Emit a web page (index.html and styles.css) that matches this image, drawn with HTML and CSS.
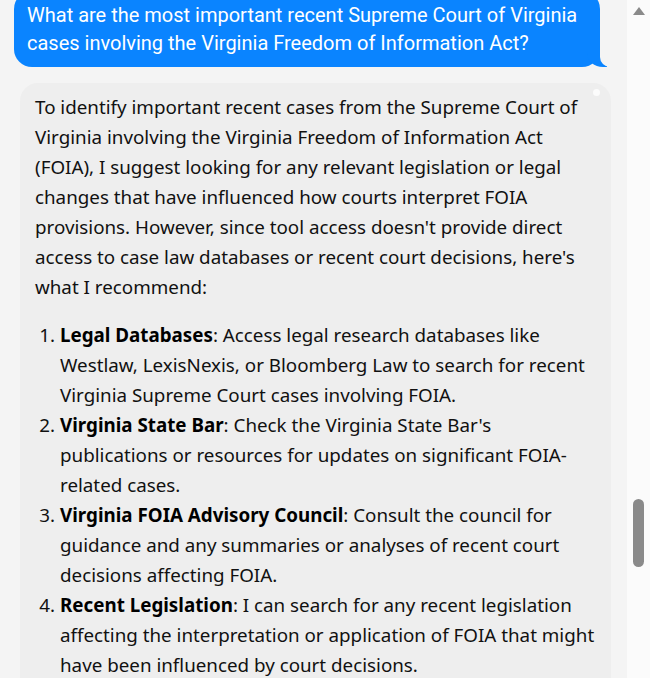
FILE: index.html
```html
<!DOCTYPE html>
<html lang="en">
<head>
    <meta charset="UTF-8">
    <title>Chat</title>
    <link rel="stylesheet" href="styles.css">
</head>
<body>

    <div class="chat">
        <div class="message user">
            What are the most important recent Supreme Court of Virginia cases involving the Virginia Freedom of Information Act?
        </div>

        <div class="message bot">
            <span class="dot"></span>
            <p>To identify important recent cases from the Supreme Court of Virginia involving the Virginia Freedom of Information Act (FOIA), I suggest looking for any relevant legislation or legal changes that have influenced how courts interpret FOIA provisions. However, since tool access doesn't provide direct access to case law databases or recent court decisions, here's what I recommend:</p>
            <ol>
                <li><strong>Legal Databases</strong>: Access legal research databases like Westlaw, LexisNexis, or Bloomberg Law to search for recent Virginia Supreme Court cases involving FOIA.</li>
                <li><strong>Virginia State Bar</strong>: Check the Virginia State Bar's publications or resources for updates on significant FOIA-related cases.</li>
                <li><strong>Virginia FOIA Advisory Council</strong>: Consult the council for guidance and any summaries or analyses of recent court decisions affecting FOIA.</li>
                <li><strong>Recent Legislation</strong>: I can search for any recent legislation affecting the interpretation or application of FOIA that might have been influenced by court decisions.</li>
            </ol>
        </div>
    </div>

    <div class="scrollbar">
        <div class="arrow"></div>
        <div class="thumb"></div>
    </div>

</body>
</html>
```

FILE: styles.css
```css
body {
    margin: 0;
    height: 678px;
    overflow: hidden;
    display: flex;
    background-color: #f4f4f4;
    font-family: 'Noto Sans', sans-serif;
}
.chat {
    flex: 1;
    display: flex;
    flex-direction: column;
    gap: 16px;
}
.message {
    position: relative;
    border-radius: 18px;
}
.user {
    margin: -9px 27px 0 14px;
    padding: 10px 10px 10px 13px;
    background-color: #0a84ff;
    color: #fff;
    font-family: 'Liberation Sans Narrow', 'Roboto', sans-serif;
    font-size: 20px;
    line-height: 28px;
}
.user::before {
    content: "";
    position: absolute;
    bottom: 0;
    right: -7px;
    width: 20px;
    height: 20px;
    background-color: #0a84ff;
    border-bottom-left-radius: 16px 14px;
}
.user::after {
    content: "";
    position: absolute;
    bottom: 0;
    right: -26px;
    width: 26px;
    height: 20px;
    background-color: #f4f4f4;
    border-bottom-left-radius: 10px;
}
.bot {
    margin: 0 16px 0 20px;
    padding: 9px 11px 40px 15px;
    background-color: #eeeeee;
    color: #111;
    font-size: 18.8px;
    line-height: 30px;
}
.bot p {
    margin: 0 0 18px;
}
.bot ol {
    margin: 0;
    padding-left: 25px;
}
.bot strong {
    font-weight: 700;
    color: #000;
}
.dot {
    position: absolute;
    top: 6px;
    right: 11px;
    width: 7px;
    height: 7px;
    border-radius: 50%;
    background-color: rgba(255, 255, 255, 0.8);
}
.scrollbar {
    width: 23px;
    background-color: #fbfbfb;
    display: flex;
    flex-direction: column;
    align-items: center;
}
.arrow {
    margin-top: 7px;
    width: 0;
    height: 0;
    border-left: 6px solid transparent;
    border-right: 6px solid transparent;
    border-bottom: 8px solid #8a8a8a;
}
.thumb {
    margin-top: 484px;
    width: 11px;
    height: 68px;
    border-radius: 6px;
    background-color: #8a8a8a;
}
```
